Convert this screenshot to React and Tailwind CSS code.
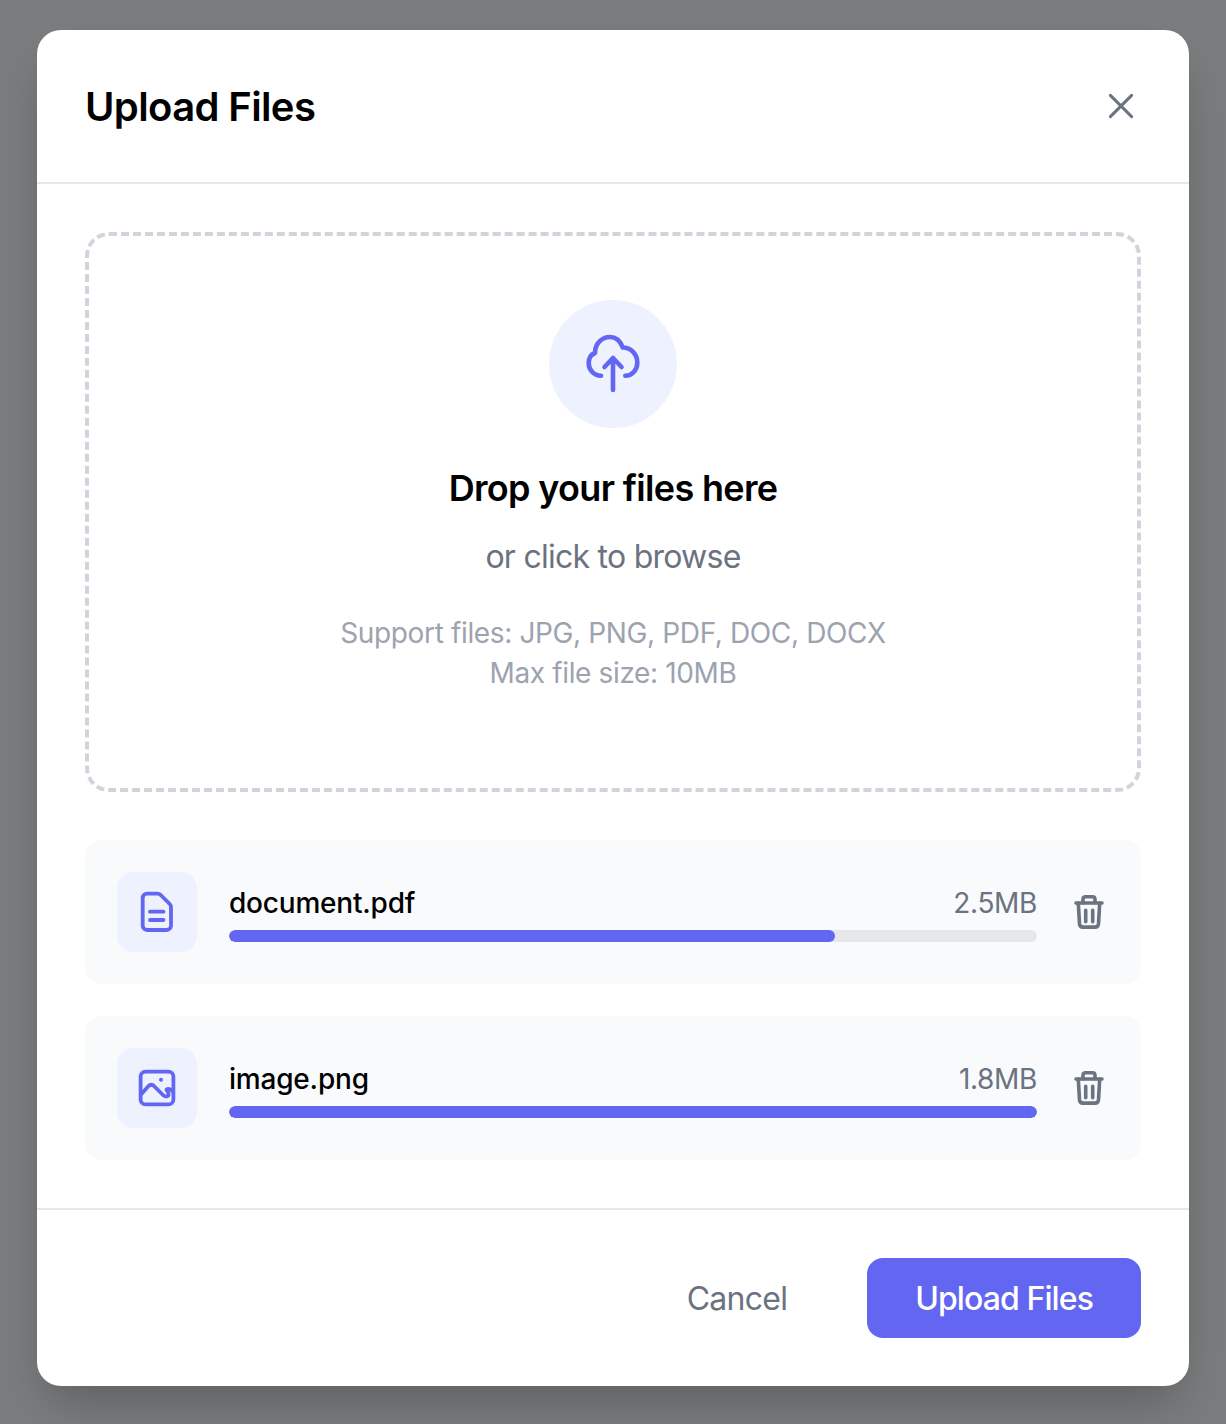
import React from "react";

const CloudIcon = () => (
    <svg width="64" height="64" viewBox="0 0 64 64" fill="none" stroke="#6366f1" strokeWidth="4.6" strokeLinecap="round" strokeLinejoin="round">
        <path d="M20 43.7C12.5 43.7 7.7 37.5 7.7 31C7.7 26 10 22.5 14 21C14 11.5 21 5 29 5C35 5 39.5 9.5 41.7 15.5C50 15.5 56.3 22 56.3 30.7C56.3 38 51 43.7 44.3 43.7" />
        <path d="M32 58V26M23.5 35L32 26L40.5 35" />
    </svg>
);

const FileIcon = () => (
    <svg width="48" height="48" viewBox="0 0 48 48" fill="none" stroke="#6366f1" strokeWidth="3.8" strokeLinecap="round" strokeLinejoin="round">
        <path d="M14 5.7H24.5C25.8 5.7 26.8 6.2 27.7 7L36.7 16C37.6 16.9 38 18 38 19.2V37.7C38 40.1 36.1 42 33.7 42H14C11.6 42 9.7 40.1 9.7 37.7V10C9.7 7.6 11.6 5.7 14 5.7Z" />
        <path d="M17 23.7H30.5M17 32H30.5" />
    </svg>
);

const ImageIcon = () => (
    <svg width="48" height="48" viewBox="0 0 48 48" fill="none" stroke="#6366f1" strokeWidth="3.8" strokeLinecap="round" strokeLinejoin="round">
        <rect x="7.6" y="7.6" width="32.8" height="32.8" rx="5" />
        <path d="M8.5 30L15.5 22C17 20.3 19.5 20.3 21 22L30 31C32.5 33.5 36 32.5 35.5 29.5C35 27.5 33.5 26.5 33.5 25.5C35.5 24 38.5 25.5 40 28" />
        <circle cx="28" cy="15.7" r="2" fill="#6366f1" stroke="none" />
    </svg>
);

const TrashIcon = () => (
    <svg width="40" height="40" viewBox="0 0 40 40" fill="none" stroke="#6b7280" strokeWidth="3.6" strokeLinecap="round" strokeLinejoin="round">
        <path d="M7 11H33" />
        <path d="M14 10.7V7.2C14 5.7 15 4.7 16.5 4.7H23.5C25 4.7 26 5.7 26 7.2V10.7" />
        <path d="M9.3 11.2L10.5 31.7C10.7 33.7 12 35.1 14 35.1H26C28 35.1 29.3 33.7 29.5 31.7L30.7 11.2" />
        <path d="M16.7 18.2V29.7M23.7 18.2V29.7" />
    </svg>
);

const CloseIcon = () => (
    <svg width="32" height="32" viewBox="0 0 32 32" fill="none" stroke="#6b7280" strokeWidth="3" strokeLinecap="round">
        <path d="M5.4 5.4L26.6 26.6M26.6 5.4L5.4 26.6" />
    </svg>
);

const files = [
    { name: "document.pdf", size: "2.5MB", progress: 75, icon: <FileIcon /> },
    { name: "image.png", size: "1.8MB", progress: 100, icon: <ImageIcon /> },
];

const FileRow = ({ file }) => (
    <div className="flex items-center gap-8 p-8 rounded-2xl bg-[#f9fafc]">
        <div className="w-20 h-20 rounded-2xl bg-[#eef2ff] flex items-center justify-center shrink-0">
            {file.icon}
        </div>
        <div className="flex-1">
            <div className="flex justify-between items-center mb-2 h-10">
                <span className="text-[28px] leading-10 font-medium text-black tracking-[-0.2px] translate-y-px">{file.name}</span>
                <span className="text-[28px] leading-10 text-[#6b7280] tracking-[-0.35px] translate-y-px">{file.size}</span>
            </div>
            <div className="h-3 rounded-full bg-[#e5e7eb] overflow-hidden">
                <div className="h-full rounded-full bg-[#6366f1]" style={{ width: `${file.progress}%` }} />
            </div>
        </div>
        <button className="w-10 h-10 flex items-center justify-center shrink-0">
            <TrashIcon />
        </button>
    </div>
);

export default function App() {
    return (
        <div className="w-full h-[1424px] bg-[#7b7c7e] flex items-start justify-center pt-[30px] font-['Inter',sans-serif]">
            <div className="w-[1152px] bg-white rounded-3xl shadow-[0_25px_50px_-12px_rgba(0,0,0,0.25)] overflow-hidden">
                <div className="flex items-center justify-between p-12 border-b-2 border-[#e5e7eb]">
                    <h2 className="text-[40px] leading-14 font-semibold text-black tracking-[-0.62px] translate-y-px">Upload Files</h2>
                    <button className="w-10 h-10 flex items-center justify-center">
                        <CloseIcon />
                    </button>
                </div>

                <div className="p-12 border-b-2 border-[#e5e7eb]">
                    <div className="border-4 border-dashed border-[#d1d5db] rounded-3xl pt-16 pb-24 flex flex-col items-center text-center">
                        <div className="w-32 h-32 rounded-full bg-[#eef2ff] flex items-center justify-center mb-8">
                            <CloudIcon />
                        </div>
                        <h3 className="text-4xl leading-14 font-semibold text-black mb-4 tracking-[-0.67px]">Drop your files here</h3>
                        <p className="text-[32px] leading-12 text-[#6b7280] mb-8 tracking-[-0.75px] translate-y-px">or click to browse</p>
                        <p className="text-[28px] leading-10 text-[#9ca3af] tracking-[-0.36px] translate-y-px">
                            Support files: JPG, PNG, PDF, DOC, DOCX
                            <br />
                            Max file size: 10MB
                        </p>
                    </div>

                    <div className="mt-12 flex flex-col gap-8">
                        {files.map((file) => (
                            <FileRow key={file.name} file={file} />
                        ))}
                    </div>
                </div>

                <div className="flex justify-end gap-8 p-12">
                    <button className="h-20 px-12 rounded-2xl text-[32px] font-normal text-[#6b7280] tracking-[-0.75px]">
                        <span className="block translate-y-px">Cancel</span>
                    </button>
                    <button className="h-20 px-12 rounded-2xl text-[32px] font-medium text-white bg-[#6366f1] tracking-[-0.9px]">
                        <span className="block translate-y-px">Upload Files</span>
                    </button>
                </div>
            </div>
        </div>
    );
}
